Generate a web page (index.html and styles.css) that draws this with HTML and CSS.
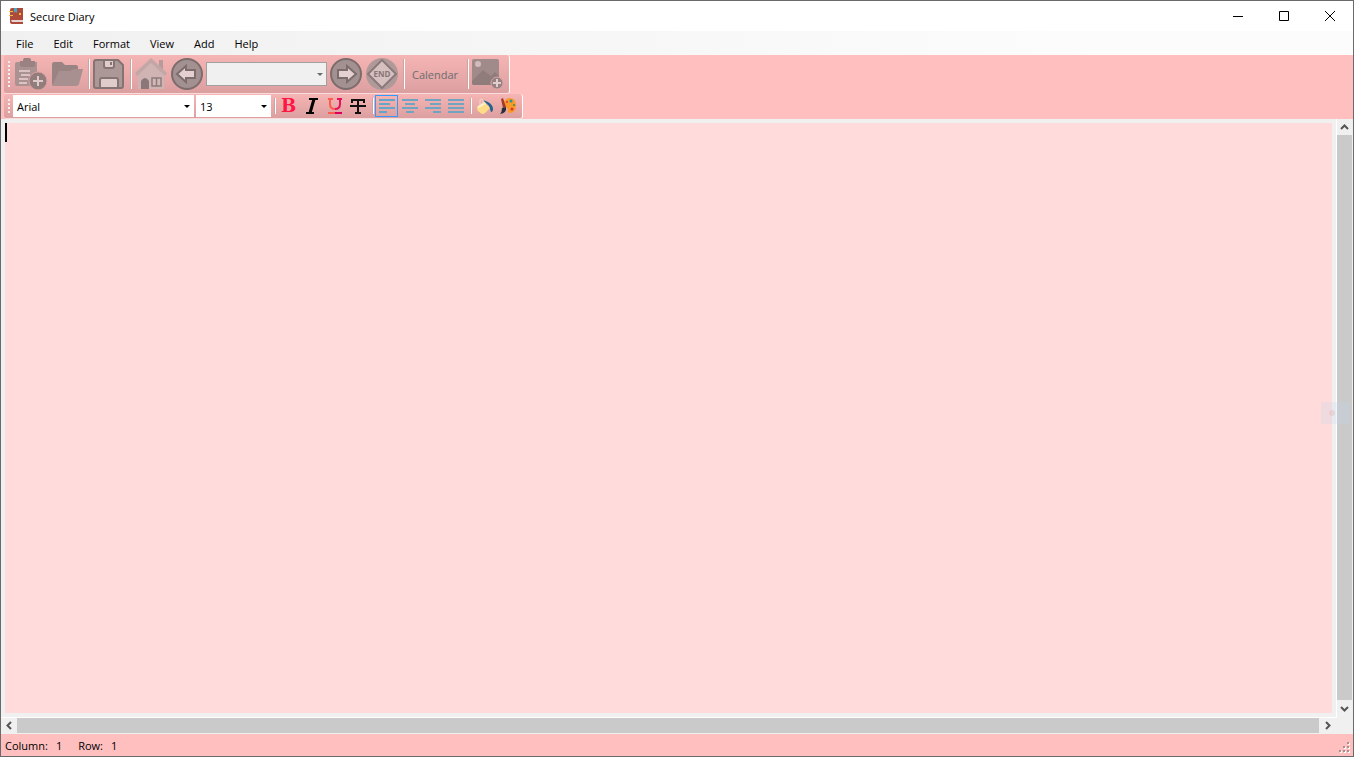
FILE: index.html
```html
<!DOCTYPE html>
<html lang="en">
<head>
    <meta charset="UTF-8">
    <meta name="viewport" content="width=device-width, initial-scale=1.0">
    <title>Secure Diary</title>
    <link rel="stylesheet" href="styles.css">
</head>
<body>
    <div class="window">
        <header class="titlebar">
            <svg class="app-icon" viewBox="0 0 16 16">
                <path d="M3 0h11v16H3a2 2 0 0 1-2-2V2a2 2 0 0 1 2-2z" fill="#ae4a3c"/>
                <path d="M2 12h12v2H3z" fill="#e6d5d0"/>
                <path d="M5 0h3v5L6.500 3.500 5 5z" fill="#47a9c6"/>
                <path d="M0 3h4v1H0zM0 7h4v1H0zM10 5h2v2h-2z" fill="#f3c13a"/>
            </svg>
            <h1>Secure Diary</h1>
            <div class="win-btns">
                <button aria-label="Minimize"><svg viewBox="0 0 10 10"><path d="M0 5.500h10"/></svg></button>
                <button aria-label="Maximize"><svg viewBox="0 0 10 10"><path d="M.5.5h9v9h-9z"/></svg></button>
                <button aria-label="Close"><svg viewBox="0 0 10 10"><path d="M0 0l10 10M10 0L0 10"/></svg></button>
            </div>
        </header>

        <nav class="menu">
            <button>File</button>
            <button>Edit</button>
            <button>Format</button>
            <button>View</button>
            <button>Add</button>
            <button>Help</button>
        </nav>

        <div class="toolbars">
            <div class="toolbar main-bar">
                <span class="grip"></span>
                <button class="tool" aria-label="New entry" disabled>
                    <svg viewBox="0 0 32 32">
                        <path d="M2 4h6a4 4 0 0 1 8 0h6v24H2a2 2 0 0 1-2-2V6a2 2 0 0 1 2-2z" fill="#ab9292"/>
                        <path d="M5 3h3a4 4 0 0 1 8 0h4v4a2 2 0 0 1-2 2H7a2 2 0 0 1-2-2z" fill="#9a8282"/>
                        <path d="M4 13h11M6 17h9M4 21h9M4 25h8" stroke="#dcc2c2" stroke-width="2"/>
                        <circle cx="23" cy="23" r="9" fill="#937c7c" stroke="#d99f9f"/>
                        <path d="M23 18v10M18 23h10" stroke="#dfcaca" stroke-width="2"/>
                    </svg>
                </button>
                <button class="tool" aria-label="Open" disabled>
                    <svg viewBox="0 0 32 32">
                        <path d="M1 27V6q0-2 2-2h8l3 3h11q2 0 2 2v5z" fill="#9a8383"/>
                        <path d="M1 28L8 13h11l4-2h9l-4 15q-1 2-3 2z" fill="#a89090"/>
                    </svg>
                </button>
                <span class="sep"></span>
                <button class="tool" aria-label="Save" disabled>
                    <svg viewBox="0 0 32 32" stroke="#857474" stroke-width="2">
                        <path d="M3 2h22l5 5v21q0 2-2 2H3q-2 0-2-2V4q0-2 2-2z" fill="#ad9898"/>
                        <path d="M11 2h10v6q0 2-2 2h-6q-2 0-2-2z" fill="#e1cccc"/>
                        <path d="M18 4v3"/>
                        <path d="M7 30v-8q0-2 2-2h14q2 0 2 2v8z" fill="#e1cccc"/>
                    </svg>
                </button>
                <span class="sep"></span>
                <button class="tool" aria-label="Home" disabled>
                    <svg viewBox="0 0 32 32">
                        <path d="M24 2h4v12h-4z" fill="#b79b9b"/>
                        <path d="M3 16L16 4l13 12v15H3z" fill="#d0b3b3"/>
                        <path d="M0 15L16 0l16 15-2 3L16 5 2 18z" fill="#c3a7a7"/>
                        <path d="M6 31V23q4-6 8 0v8z" fill="#8b7777"/>
                        <path d="M17 20h9v8h-9zM21.500 20v8" fill="#d2b9b9" stroke="#8f7b7b" stroke-width="1.500"/>
                    </svg>
                </button>
                <button class="tool" aria-label="Previous entry" disabled>
                    <svg viewBox="0 0 32 32" stroke="#7c6c6c" stroke-width="2">
                        <circle cx="16" cy="16" r="15" fill="#a39090"/>
                        <path d="M6 16l9-8v4h9v8h-9v4z" fill="#e4d0d0"/>
                    </svg>
                </button>
                <label class="combo date-combo">
                    <select aria-label="Entry date" disabled><option></option></select>
                </label>
                <button class="tool" aria-label="Next entry" disabled>
                    <svg viewBox="0 0 32 32" stroke="#7c6c6c" stroke-width="2">
                        <circle cx="16" cy="16" r="15" fill="#a39090"/>
                        <path d="M26 16l-9-8v4H8v8h9v4z" fill="#e4d0d0"/>
                    </svg>
                </button>
                <button class="tool" aria-label="Last entry" disabled>
                    <svg viewBox="0 0 32 32">
                        <circle cx="16" cy="16" r="16" fill="#b09999"/>
                        <path d="M16 2l14 14-14 14L2 16z" fill="#d5bfbf" stroke="#8b7979" stroke-width="2" stroke-linejoin="round"/>
                        <text class="end-text" x="16" y="19" text-anchor="middle">END</text>
                    </svg>
                </button>
                <span class="sep"></span>
                <button class="calendar" disabled>Calendar</button>
                <span class="sep"></span>
                <button class="tool" aria-label="Add picture" disabled>
                    <svg viewBox="0 0 32 32">
                        <rect y="1" width="27" height="26" rx="2" fill="#a18a8a"/>
                        <circle cx="6" cy="6" r="3" fill="#d5bcbc"/>
                        <path d="M0 23L11 12l8 6 4-4 4 4v7q0 2-2 2H2q-2 0-2-2z" fill="#917c7c"/>
                        <circle cx="25" cy="25" r="6" fill="#978181" stroke="#d7a6a6"/>
                        <path d="M25 21v8M21 25h8" stroke="#e3cccc" stroke-width="2"/>
                    </svg>
                </button>
            </div>

            <div class="toolbar format-bar">
                <span class="grip"></span>
                <label class="combo font-combo">
                    <select aria-label="Font"><option>Arial</option></select>
                </label>
                <label class="combo size-combo">
                    <select aria-label="Font size"><option>13</option></select>
                </label>
                <span class="sep"></span>
                <button class="tool bold" aria-label="Bold">B</button>
                <button class="tool" aria-label="Italic">
                    <svg viewBox="0 0 16 16" stroke="#000" stroke-width="2"><path d="M5 1h9M2 15h8"/><path d="M10 1L6 15" stroke-width="3"/></svg>
                </button>
                <button class="tool" aria-label="Underline">
                    <svg viewBox="0 0 16 16" fill="none" stroke-width="2">
                        <path d="M1 1h5M3 1v5q0 5 5 5" stroke="#ff5b4e"/>
                        <path d="M10 1h5M13 1v5q0 5-5 5" stroke="#e5125d"/>
                        <path d="M1 15h7" stroke="#ff5b4e"/><path d="M8 15h7" stroke="#d8005f"/>
                    </svg>
                </button>
                <button class="tool" aria-label="Strikethrough">
                    <svg viewBox="0 0 16 16" fill="none" stroke="#111" stroke-width="2"><path d="M2 5V2h12v3M8 2v12M5 15h6M0 8h16"/></svg>
                </button>
                <span class="sep"></span>
                <button class="tool active" aria-label="Align left" aria-pressed="true">
                    <svg viewBox="0 0 16 16" stroke="#64a6c8" stroke-width="2"><path d="M0 2h16M0 6h11M0 10h16M0 14h8"/></svg>
                </button>
                <button class="tool" aria-label="Align center">
                    <svg viewBox="0 0 16 16" stroke="#6fa5c3" stroke-width="2"><path d="M0 2h16M3 6h10M0 10h16M4 14h8"/></svg>
                </button>
                <button class="tool" aria-label="Align right">
                    <svg viewBox="0 0 16 16" stroke="#6fa5c3" stroke-width="2"><path d="M0 2h16M5 6h11M0 10h16M8 14h8"/></svg>
                </button>
                <button class="tool" aria-label="Justify">
                    <svg viewBox="0 0 16 16" stroke="#6fa5c3" stroke-width="2"><path d="M0 2h16M0 6h16M0 10h16M0 14h16"/></svg>
                </button>
                <span class="sep"></span>
                <button class="tool" aria-label="Background color">
                    <svg viewBox="0 0 16 16">
                        <path d="M6 2l5 2q5 3 5 7 0 3-2 3l-2-6z" fill="#21638f"/>
                        <path d="M0 9l7-5 6 6-5 5q-1 1-3 1l-4-3q-1-1-1-4z" fill="#ffdc85"/>
                        <path d="M0 9l7-5 2 2-7 4z" fill="#fff0c8"/>
                        <path d="M3 7V2q1-2 3 0v4" fill="none" stroke="#f2d9c8"/>
                    </svg>
                </button>
                <button class="tool" aria-label="Text color">
                    <svg viewBox="0 0 16 16">
                        <path d="M4 6q0-6 6-6 6 1 6 7 0 8-6 8-3 0-2-3 0-3-4-3z" fill="#f99a2b"/>
                        <circle cx="7" cy="4" r="1" fill="#d9372c"/>
                        <circle cx="11" cy="3" r="1.500" fill="#1b9c9c"/>
                        <circle cx="14" cy="7" r="1" fill="#2f8b5b"/>
                        <circle cx="12" cy="11" r="1.500" fill="#d9372c"/>
                        <path d="M1 1l2-1 3 9-3 1z" fill="#a33b2a"/>
                        <path d="M2 10l4-1q1 6-6 7 2-2 2-6z" fill="#26303a"/>
                    </svg>
                </button>
            </div>
        </div>

        <main class="editor">
            <div class="page">
                <textarea aria-label="Diary entry" spellcheck="false"></textarea>
                <span class="caret"></span>
            </div>
            <div class="scroll vertical">
                <button aria-label="Scroll up"><svg viewBox="0 0 9 9"><path d="M1 6l3.500-3.500L8 6"/></svg></button>
                <div class="thumb"></div>
                <button aria-label="Scroll down"><svg viewBox="0 0 9 9"><path d="M1 3l3.500 3.500L8 3"/></svg></button>
            </div>
            <div class="scroll horizontal">
                <button aria-label="Scroll left"><svg viewBox="0 0 9 9"><path d="M6 1L2.500 4.500 6 8"/></svg></button>
                <div class="thumb"></div>
                <button aria-label="Scroll right"><svg viewBox="0 0 9 9"><path d="M3 1l3.500 3.500L3 8"/></svg></button>
            </div>
            <div class="float-tab"><span></span></div>
        </main>

        <footer class="status">
            <span>Column:</span><span class="num">1</span>
            <span>Row:</span><span class="num">1</span>
            <svg class="resize" viewBox="0 0 12 12">
                <path d="M9 1h2v2H9zM5 5h2v2H5zM9 5h2v2H9zM1 9h2v2H1zM5 9h2v2H5zM9 9h2v2H9z" fill="#fff"/>
                <path d="M8 0h2v2H8zM4 4h2v2H4zM8 4h2v2H8zM0 8h2v2H0zM4 8h2v2H4zM8 8h2v2H8z" fill="#a39292"/>
            </svg>
        </footer>
    </div>
</body>
</html>
```
FILE: styles.css
```css
*{
    margin: 0;
    padding: 0;
    box-sizing: border-box;
}
body, button, select{
    font-family: "Open Sans", "Noto Sans", sans-serif;
    font-size: 11px;
    color: #000;
}
button{
    border: none;
    background: none;
}
svg{
    display: block;
}
.window{
    height: 100vh;
    display: flex;
    flex-direction: column;
    border: 1px solid #6b696b;
    background: #f0f0f0;
}

/* title bar */
.titlebar{
    height: 30px;
    display: flex;
    align-items: center;
    background: #fff;
    padding-left: 8px;
}
.app-icon{
    width: 16px;
    height: 16px;
    margin-right: 5px;
}
.titlebar h1{
    font-size: 11px;
    font-weight: normal;
}
.win-btns{
    display: flex;
    margin-left: auto;
}
.win-btns button{
    width: 46px;
    height: 30px;
    display: flex;
    align-items: center;
    justify-content: center;
}
.win-btns svg{
    width: 10px;
    height: 10px;
    fill: none;
    stroke: #000;
}

/* menu */
.menu{
    height: 24px;
    display: flex;
    align-items: center;
    gap: 20px;
    padding-left: 15px;
    background: linear-gradient(to right, #f0f0f0, #fcfcfc 80%);
}

/* toolbars */
.toolbars{
    display: flex;
    flex-direction: column;
    align-items: flex-start;
    padding-left: 3px;
    background: #ffbfbf;
}
.toolbar{
    display: flex;
    align-items: center;
    padding-right: 3px;
    border-right: 1px solid #fff;
    border-bottom: 1px solid #fbdcdc;
    border-radius: 3px;
    background: linear-gradient(#f6b5b5, #dc9f9f);
}
.main-bar{
    height: 39px;
}
.format-bar{
    height: 25px;
}
.grip{
    width: 2px;
    margin: 0 3px 0 4px;
    background: repeating-linear-gradient(#f4eded 0 2px, transparent 2px 4px);
}
.main-bar .grip{
    height: 26px;
}
.format-bar .grip{
    height: 14px;
}
.sep{
    width: 2px;
    margin: 0 1px 0 3px;
    border-left: 1px solid #c9a5a5;
    border-right: 1px solid #fff;
}
.main-bar .sep{
    height: 30px;
}
.format-bar .sep{
    height: 16px;
}
.tool{
    display: flex;
    align-items: center;
    justify-content: center;
}
.main-bar .tool{
    width: 36px;
    height: 36px;
}
.main-bar .tool svg{
    width: 32px;
    height: 32px;
}
.format-bar .tool{
    width: 23px;
    height: 22px;
}
.format-bar .tool svg{
    width: 16px;
    height: 16px;
}
.format-bar .active{
    border: 1px solid #3399ff;
}
.tool.bold{
    font: bold 18px "DejaVu Serif", serif;
    line-height: 22px;
    color: #ff1744;
}
.calendar{
    width: 58px;
    color: #6d6d6d;
}
.end-text{
    font: bold 8px "Open Sans", sans-serif;
    fill: #887575;
}

/* combo boxes */
.combo{
    position: relative;
    display: flex;
    background: #fff;
}
.combo select{
    appearance: none;
    width: 100%;
    height: 22px;
    padding-left: 4px;
    border: none;
    border-radius: 0;
    background: transparent;
    opacity: 1;
}
.combo::after{
    content: "";
    position: absolute;
    right: 4px;
    top: 10px;
    border: 3px solid transparent;
    border-top-color: #000;
    border-bottom: none;
    pointer-events: none;
}
.date-combo{
    width: 121px;
    margin: 0 1px;
    border: 1px solid #a0a0a0;
    background: #f0f0f0;
}
.date-combo::after{
    right: 3px;
    border-top-color: #6d6d6d;
}
.font-combo{
    width: 181px;
    margin-right: 2px;
}
.size-combo{
    width: 75px;
}

/* editor */
.editor{
    flex: 1;
    min-height: 0;
    display: grid;
    grid-template-columns: 1fr 16px;
    grid-template-rows: 1fr 16px;
    position: relative;
}
.page{
    position: relative;
    padding: 4px;
    border-right: 1px solid #fff;
    border-bottom: 1px solid #fff;
}
.page textarea{
    display: block;
    width: 100%;
    height: 100%;
    border: none;
    outline: none;
    resize: none;
    background: #ffdbdb;
    font: 17px "Liberation Sans", Arial, sans-serif;
}
.caret{
    position: absolute;
    left: 4px;
    top: 4px;
    width: 2px;
    height: 19px;
    background: #000;
}
.scroll{
    display: flex;
}
.vertical{
    flex-direction: column;
    padding-right: 1px;
    padding-bottom: 2px;
}
.horizontal{
    grid-column: 1 / 3;
    padding-bottom: 1px;
    padding-right: 18px;
}
.scroll button{
    width: 16px;
    height: 15px;
    display: flex;
    align-items: center;
    justify-content: center;
}
.vertical button{
    width: 15px;
    height: 16px;
}
.scroll svg{
    width: 9px;
    height: 9px;
    fill: none;
    stroke: #555;
    stroke-width: 2;
}
.thumb{
    flex: 1;
    background: #cacaca;
}
.float-tab{
    position: absolute;
    right: 3px;
    top: 283px;
    width: 29px;
    height: 22px;
    display: flex;
    align-items: center;
    padding-left: 8px;
    background: rgba(190, 215, 240, 0.25);
}
.float-tab span{
    width: 6px;
    height: 6px;
    border-radius: 50%;
    background: rgba(230, 180, 180, 0.4);
}

/* status bar */
.status{
    height: 22px;
    display: flex;
    align-items: center;
    padding-left: 4px;
    background: #ffbfbf;
}
.num{
    margin: 0 16px 0 8px;
}
.resize{
    width: 12px;
    height: 12px;
    margin: 6px 2px 0 auto;
}
```
